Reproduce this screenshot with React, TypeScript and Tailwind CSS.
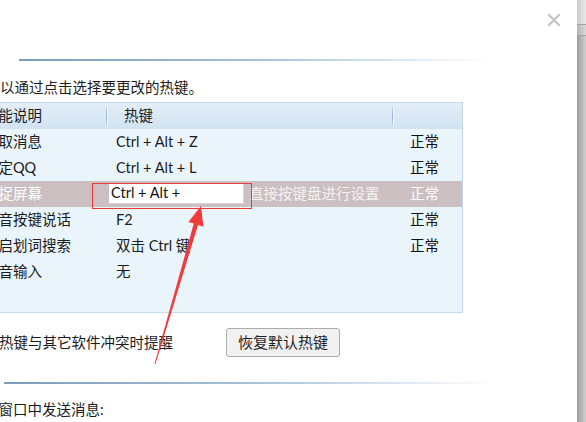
import React from 'react';

const rows = [
  { name: '提取消息', key: 'Ctrl + Alt + Z', status: '正常' },
  { name: '锁定QQ', key: 'Ctrl + Alt + L', status: '正常' },
  { name: '捕捉屏幕', key: 'Ctrl + Alt + ', status: '正常', editing: true },
  { name: '语音按键说话', key: 'F2', status: '正常' },
  { name: '开启划词搜索', key: '双击 Ctrl 键', status: '正常' },
  { name: '语音输入', key: '无', status: '' },
];

function HeaderSep() {
  return (
    <div className="flex h-[19px] self-center">
      <div className="w-px bg-gradient-to-b from-[#c9dbea] via-[#8fb1cf] to-[#c9dbea]" />
      <div className="w-px bg-[#eef5fb]" />
    </div>
  );
}

export default function App() {
  return (
    <div className="w-[586px] h-[422px] overflow-hidden bg-white flex relative font-['Lato','Noto_Sans_CJK_SC',sans-serif] text-[14.5px] text-[#1b1b1b]">
      {/* dialog body */}
      <div className="w-[577px] h-full flex flex-col overflow-hidden">
        <div className="h-[59px] flex justify-end items-start pt-[14px] pr-[17px] shrink-0">
          <svg width="12" height="12" viewBox="0 0 12 12">
            <path d="M1 1 L11 11 M11 1 L1 11" stroke="#c4c4c4" strokeWidth="2.2" strokeLinecap="square" />
          </svg>
        </div>
        <div className="ml-[19px] w-[472px] h-[2px] shrink-0 bg-gradient-to-r from-[#7c9cbd] via-[#a6c0da] to-white" />

        <div className="mt-[17px] ml-[-29px] h-[20px] leading-[20px] whitespace-nowrap shrink-0">
          您可以通过点击选择要更改的热键。
        </div>

        {/* hotkey table */}
        <div className="mt-[4px] ml-[-20px] w-[483px] shrink-0 border border-[#c4daeb] bg-[#eaf5fb]">
          <div className="h-[26px] flex items-stretch bg-gradient-to-b from-[#e2eef8] to-[#d1e3f1] leading-[26px]">
            <div className="w-[125px] pl-[3px] whitespace-nowrap">功能说明</div>
            <HeaderSep />
            <div className="w-[284px] pl-[16px]">热键</div>
            <HeaderSep />
            <div className="flex-1" />
          </div>
          <div className="h-[183px] flex flex-col">
            {rows.map((r) => (
              <div
                key={r.name}
                className={
                  r.editing
                    ? 'h-[26px] flex items-center bg-[#cbbfc1] text-white'
                    : 'h-[26px] flex items-center'
                }
              >
                <div className="w-[127px] pl-[3px] whitespace-nowrap overflow-hidden">{r.name}</div>
                {r.editing ? (
                  <div className="w-[294px] flex items-center pl-[1px]">
                    <div className="w-[135px] h-[21px] mt-[-2px] bg-white border-b border-r border-[#d6d6d6] text-[#111] leading-[20px] pl-[2px] whitespace-pre">
                      {r.key}
                    </div>
                    <span className="ml-[5px] text-[#f4f1f1] whitespace-nowrap">直接按键盘进行设置</span>
                  </div>
                ) : (
                  <div className="w-[294px] pl-[8px] whitespace-nowrap">{r.key}</div>
                )}
                <div className={r.editing ? 'flex-1 pl-[8px] text-white' : 'flex-1 pl-[8px] text-[#111]'}>
                  {r.status}
                </div>
              </div>
            ))}
          </div>
        </div>

        <div className="mt-[15px] h-[29px] flex items-center shrink-0">
          <div className="w-[226px] shrink-0 whitespace-nowrap">
            <span className="ml-[-30px]">启用热键与其它软件冲突时提醒</span>
          </div>
          <button className="w-[114px] h-[29px] border border-[#acacac] rounded-[3px] bg-[#f1f1f1] text-[15px] text-[#1e1e1e] leading-[27px]">
            恢复默认热键
          </button>
        </div>

        <div className="mt-[25px] ml-[4px] w-[490px] h-[2px] shrink-0 bg-gradient-to-r from-[#7c9cbd] via-[#a6c0da] to-white" />

        <div className="mt-[16px] ml-[-45px] h-[20px] leading-[20px] whitespace-nowrap shrink-0">
          在聊天窗口中发送消息:
        </div>
      </div>

      {/* right window edge */}
      <div className="w-[9px] h-full flex flex-col">
        <div className="h-[25px] bg-gradient-to-r from-[#c9c9c9] to-[#ececec] border-b border-[#a3a3a3]" />
        <div className="h-[11px] bg-gradient-to-r from-[#b4b4b4] to-[#dadada] border-b border-[#a3a3a3]" />
        <div className="flex-1 bg-gradient-to-r from-[#9b9b9b] to-[#d2d2d2]" />
      </div>

      {/* red annotation */}
      <div className="absolute left-[92px] top-[183px] w-[160px] h-[26px] border border-[#e8393b] pointer-events-none" />
      <svg className="absolute left-0 top-0 pointer-events-none" width="586" height="422" viewBox="0 0 586 422">
        <polygon
          points="201,206 203.4,226.8 198,225 155.5,364.1 154.5,363.9 193.8,223.6 188.4,222"
          fill="#f23b3b"
        />
      </svg>
    </div>
  );
}
